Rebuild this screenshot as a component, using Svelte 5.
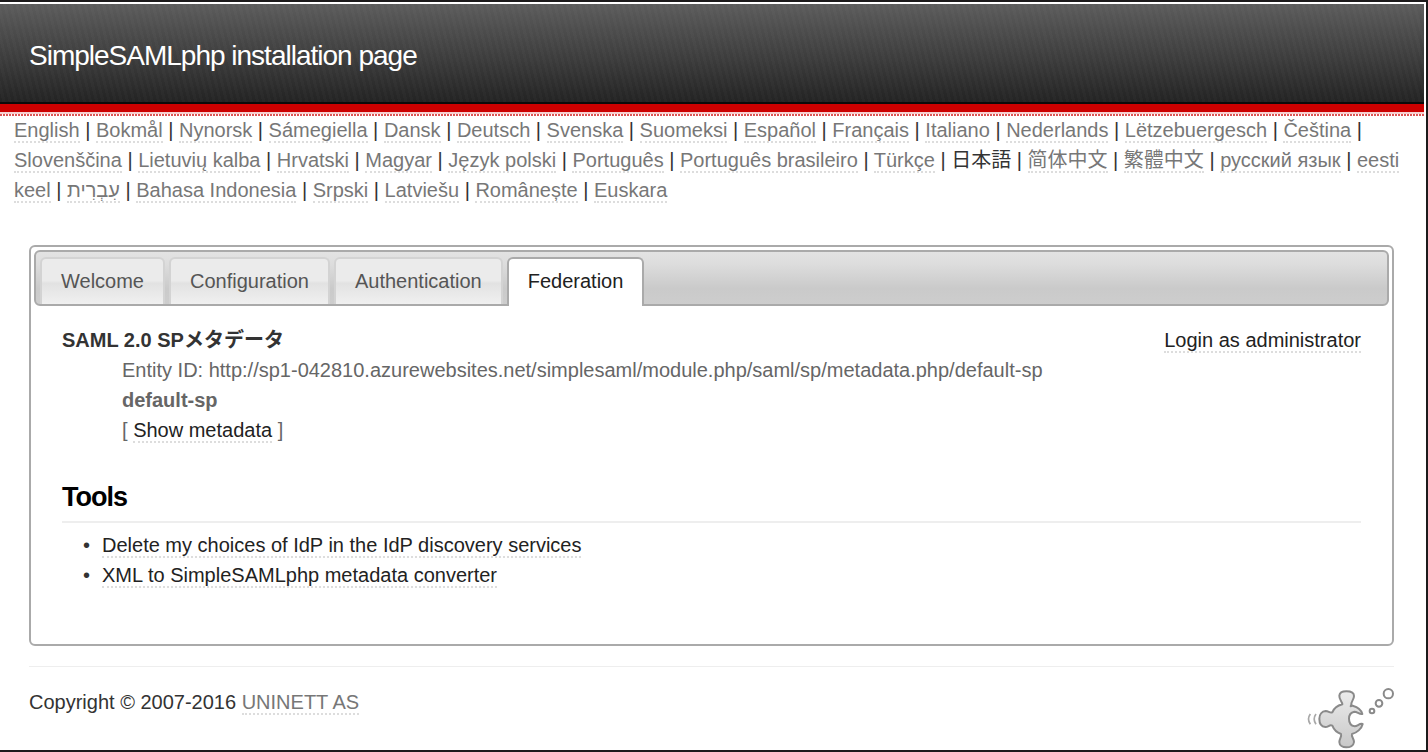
<script>
  const languages = [
    'English', 'Bokmål', 'Nynorsk', 'Sámegiella', 'Dansk', 'Deutsch', 'Svenska', 'Suomeksi',
    'Español', 'Français', 'Italiano', 'Nederlands', 'Lëtzebuergesch', 'Čeština', 'Slovenščina',
    'Lietuvių kalba', 'Hrvatski', 'Magyar', 'Język polski', 'Português', 'Português brasileiro',
    'Türkçe', '日本語', '简体中文', '繁體中文', 'русский язык', 'eesti keel', 'עִבְרִית',
    'Bahasa Indonesia', 'Srpski', 'Latviešu', 'Românește', 'Euskara'
  ];
  const currentLanguage = '日本語';
  const tabs = ['Welcome', 'Configuration', 'Authentication', 'Federation'];
  let active = $state('Federation');
</script>

<div class="page">
  <header class="banner">
    <h1>SimpleSAMLphp installation page</h1>
  </header>

  <nav class="languages" aria-label="Language">
    {#each languages as language, i}{#if i > 0}{' | '}{/if}{#if language === currentLanguage}{language}{:else}<a href="#language">{language}</a>{/if}{/each}
  </nav>

  <main class="content">
    <div class="tabs">
      <div class="tablist" role="tablist">
        {#each tabs as tab}
          <button
            type="button"
            role="tab"
            class="tab"
            class:active={active === tab}
            aria-selected={active === tab}
            onclick={() => (active = tab)}>{tab}</button>
        {/each}
      </div>

      <div class="panel" role="tabpanel">
        <div class="top">
          <dl>
            <dt>SAML 2.0 SPメタデータ</dt>
            <dd>Entity ID: http://sp1-042810.azurewebsites.net/simplesaml/module.php/saml/sp/metadata.php/default-sp</dd>
            <dd><strong>default-sp</strong></dd>
            <dd>[ <a href="#metadata">Show metadata</a> ]</dd>
          </dl>
          <div><a href="#login">Login as administrator</a></div>
        </div>

        <h2>Tools</h2>
        <ul>
          <li><a href="#discovery">Delete my choices of IdP in the IdP discovery services</a></li>
          <li><a href="#converter">XML to SimpleSAMLphp metadata converter</a></li>
        </ul>
      </div>
    </div>

    <footer>
      <p>Copyright © 2007-2016 <a href="#uninett">UNINETT AS</a></p>
      <svg class="logo" width="88" height="62" viewBox="18 12 264 186" fill="none" aria-hidden="true">
        <defs>
          <linearGradient id="piece" x1="0" y1="0" x2="0" y2="1">
            <stop offset="0" stop-color="#ececec" />
            <stop offset="1" stop-color="#c8c8c8" />
          </linearGradient>
        </defs>
        <path
          d="M127 64C127 56 117 50 118 38C119 28 129 25 139 25C151 25 162 29 162 39C162 50 153 55 154 65L152 70L158 68C172 72 184 80 187 93C178 95 172 86 163 86C152 88 147 97 147 107C147 118 153 128 164 130C173 130 178 120 188 123C185 137 170 150 156 153C153 161 162 167 162 177C161 188 150 193 139 193C128 193 118 187 118 177C118 167 126 161 123 153C110 149 101 138 97 128C88 124 86 132 76 132C64 131 58 120 58 107C58 94 66 85 77 84C86 84 89 91 97 88C101 78 112 68 127 64Z"
          fill="url(#piece)" stroke="#8a8a8a" stroke-width="6" stroke-linejoin="round" />
        <g stroke="#8a8a8a" stroke-width="6">
          <circle cx="216" cy="84" r="7" />
          <circle cx="237" cy="61" r="10" />
          <circle cx="265" cy="32" r="14" />
        </g>
        <g stroke="#a8a8a8" stroke-width="5">
          <path d="M31 93Q20 108 31 124" />
          <path d="M48 93Q37 108 48 124" />
        </g>
      </svg>
    </footer>
  </main>
</div>

<style>
  :global(body) {
    background: #fff;
  }

  .page {
    box-sizing: border-box;
    min-height: 100vh;
    border: 2px solid #1c1a1b;
    border-left: 0;
    padding-top: 2px;
    color: #333;
    font-family: "Liberation Sans", "Noto Sans CJK JP", sans-serif;
    font-size: 20px;
    line-height: 30px;
  }

  .banner {
    position: relative;
    margin-right: 2px;
    padding: 36px 29px 32px;
    border-bottom: 8px solid #c00;
    box-shadow: inset 0 -2px #0c0a0a;
    background:
      repeating-linear-gradient(76deg, transparent 0 3px, rgba(255, 255, 255, 0.02) 3px 6px),
      linear-gradient(#5c5c5c, #222);
  }

  .banner::after {
    content: "";
    position: absolute;
    left: 0;
    right: 0;
    bottom: -12px;
    height: 4px;
    background:
      linear-gradient(#f6d0d0, #f6d0d0) top / 100% 2px no-repeat,
      repeating-linear-gradient(90deg, #d55 0 2px, #fff 2px 3px);
  }

  h1 {
    margin: 0;
    color: #fff;
    font-size: 28px;
    font-weight: normal;
    line-height: 32px;
    letter-spacing: -1px;
  }

  .languages {
    padding: 3px 14px 0;
  }

  a {
    color: #222;
    text-decoration: none;
    border-bottom: 2px dotted #ddd;
  }

  .languages a,
  footer a {
    color: #777;
  }

  .content {
    padding: 40px 32px 0 29px;
  }

  .tabs {
    border: 2px solid #aaa;
    border-radius: 6px;
    padding: 3px;
  }

  .tablist {
    display: flex;
    gap: 4px;
    padding: 5px 4px 0;
    border: 2px solid #aaa;
    border-radius: 6px;
    background: linear-gradient(#e3e3e3, #dcdcdc 25%, #cacaca 70%, #cdcdcd);
  }

  .tab {
    padding: 7px 19px 8px;
    border: 2px solid #d3d3d3;
    border-bottom: 0;
    border-radius: 6px 6px 0 0;
    background: linear-gradient(#ebebeb 0 48%, #e2e2e2 54%, #f0f0f0);
    color: #555;
    font: inherit;
    cursor: pointer;
  }

  .tab.active {
    margin-bottom: -2px;
    padding-bottom: 10px;
    border-color: #aaa;
    background: #fff;
    color: #212121;
  }

  .panel {
    padding: 19px 28px 51px;
  }

  .top {
    display: flex;
    justify-content: space-between;
    gap: 20px;
  }

  dl {
    margin: 0;
  }

  dt {
    font-weight: bold;
  }

  dd {
    margin: 0 0 0 60px;
    color: #666;
  }

  h2 {
    margin: 36px 0 7px;
    padding-bottom: 8px;
    border-bottom: 2px solid #eee;
    color: #000;
    font-size: 27px;
    line-height: 32px;
    letter-spacing: -1px;
  }

  ul {
    margin: 0;
    padding: 0;
    list-style: none;
  }

  li {
    padding-left: 21px;
  }

  li::before {
    content: "•";
    display: inline-block;
    width: 19px;
  }

  footer {
    display: flex;
    justify-content: space-between;
    margin-top: 20px;
    padding-top: 20px;
    border-top: 1px solid #eee;
  }

  footer p {
    margin: 0;
  }

  .logo {
    display: block;
  }
</style>
